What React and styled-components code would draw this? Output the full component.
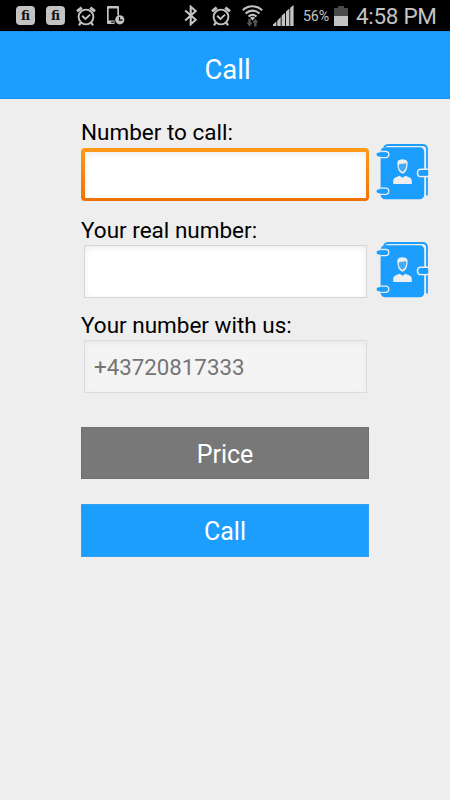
import React from 'react';
import styled, { createGlobalStyle } from 'styled-components';

const GlobalStyle = createGlobalStyle`
  * {
    box-sizing: border-box;
  }

  body {
    margin: 0;
    background: #eeeeee;
    font-family: Roboto, "Liberation Sans", sans-serif;
  }
`;

const Screen = styled.div`
  width: 450px;
  height: 800px;
  overflow: hidden;
  background: #eeeeee;
`;

const StatusBar = styled.div`
  height: 31px;
  padding: 0 14px 0 16px;
  display: flex;
  align-items: center;
  justify-content: space-between;
  background: #000;
  color: #c3c3c3;
`;

const StatusGroup = styled.div`
  display: flex;
  align-items: center;
`;

const StatusIcon = styled.svg`
  display: block;
  flex: none;
  margin-right: ${(props) => props.$gap || 0}px;
`;

const FiBadge = styled.div`
  width: 19px;
  height: 19px;
  margin-right: 11px;
  border-radius: 4px;
  background: #c3c3c3;
  color: #111;
  font-family: "DejaVu Serif", serif;
  font-size: 12.5px;
  font-weight: bold;
  line-height: 19px;
  text-align: center;
`;

const Percent = styled.span`
  width: 27px;
  margin-right: 4px;
  margin-left: -1px;
  font-size: 14.2px;
  line-height: 31px;
  letter-spacing: -0.1px;
  white-space: nowrap;
  padding-top: 2px;
`;

const Clock = styled.span`
  width: 80px;
  font-size: 22.5px;
  line-height: 31px;
  letter-spacing: -0.3px;
  padding-top: 2px;
  white-space: nowrap;
`;

const Header = styled.header`
  height: 68px;
  padding: 7px 0 0 5px;
  border-top: 1px solid #1c93ee;
  border-bottom: 1px solid #1c93ee;
  background: #1c9eff;
  color: #fff;
  font-size: 27.5px;
  line-height: 61px;
  text-align: center;
`;

const Form = styled.main`
  padding: 19px 0 0 81px;
`;

const Field = styled.div`
  margin-bottom: ${(props) => props.$space}px;
`;

const Label = styled.label`
  display: block;
  height: ${(props) => props.$height}px;
  color: #000;
  font-size: 22.5px;
  line-height: 29px;
  white-space: nowrap;
`;

const InputRow = styled.div`
  height: 53px;
  display: flex;
  align-items: center;
`;

const Input = styled.div`
  width: 283px;
  height: 53px;
  margin: 0 2px 0 3px;
  padding: 0 9px;
  border: 1px solid ${(props) => (props.$disabled ? '#dcdcdc' : '#d6d6d6')};
  background: ${(props) => (props.$disabled ? '#f4f4f4' : '#fff')};
  box-shadow: inset 0 2px 6px rgba(0, 0, 0, ${(props) => (props.$disabled ? 0.05 : 0.08)});
  color: #757575;
  font-size: 22.3px;
  line-height: 53px;
`;

const FocusedInput = styled(Input)`
  width: 288px;
  margin: 0;
  border: none;
  border-radius: 4px;
  background: linear-gradient(#fff, #fff) content-box, linear-gradient(#ff9a18, #ee7206);
  padding: 3.5px;
  box-shadow: none;

  &::before {
    content: '';
    display: block;
    height: 100%;
    box-shadow: inset 0 2px 6px rgba(0, 0, 0, 0.08);
  }
`;

const ContactButton = styled.button`
  width: 54px;
  height: 57px;
  margin: ${(props) => props.$top}px 0 0 7px;
  padding: 0;
  border: none;
  background: none;

  svg {
    display: block;
    overflow: visible;
  }
`;

const Button = styled.button`
  display: block;
  width: 288px;
  height: ${(props) => (props.$primary ? 53 : 52)}px;
  margin-bottom: 25px;
  padding: ${(props) => (props.$primary ? 1 : 2)}px 0 0;
  border: 1px solid ${(props) => (props.$primary ? '#389fee' : '#707070')};
  background: ${(props) => (props.$primary ? '#1c9eff' : '#787878')};
  color: #fff;
  font-family: inherit;
  font-size: 25px;
`;

const Actions = styled.div`
  padding-top: 34px;
`;

function AlarmIcon({ gap }) {
  return (
    <StatusIcon $gap={gap} width="20" height="20" viewBox="0 0 20 20" fill="none" stroke="#c3c3c3">
      <circle cx="10" cy="11" r="7.4" strokeWidth="1.9" />
      <path d="M6.2 9.8l3.2 3.1 4.7-4.3" strokeWidth="1.9" />
      <path d="M1.1 5.4l4.6-3.8M14.3 1.6l4.6 3.8" strokeWidth="3" />
      <path d="M4.8 16.5l-1.8 2.8M15.2 16.5l1.8 2.8" strokeWidth="2.2" />
    </StatusIcon>
  );
}

function PhoneClockIcon() {
  return (
    <StatusIcon width="18" height="19" viewBox="0 0 18 19" fill="none">
      <path d="M0 1a1 1 0 0 1 1-1h10a1 1 0 0 1 1 1v8.5h-1.7V2.5H1.7v12H7.5V18H1a1 1 0 0 1-1-1z" fill="#c3c3c3" />
      <path d="M4.2 16.2h2.6" stroke="#000" strokeWidth="1.2" />
      <circle cx="12.8" cy="13.8" r="4.6" fill="#c3c3c3" />
      <path d="M12.5 11v3.1h3" stroke="#000" strokeWidth="1.2" />
    </StatusIcon>
  );
}

function BluetoothIcon() {
  return (
    <StatusIcon $gap={13} width="14" height="21" viewBox="0 0 14 21" fill="none">
      <path d="M1.2 5.5l10.5 9.3-5 4.5V1.7l5 4.3L1.2 15.5" stroke="#c3c3c3" strokeWidth="2.1" />
    </StatusIcon>
  );
}

function WifiIcon() {
  return (
    <StatusIcon $gap={10} width="21" height="22" viewBox="0 0 21 22" fill="none">
      <g stroke="#c3c3c3" strokeWidth="2.1">
        <path d="M.8 5.2c5.6-5.2 13.8-5.2 19.4 0" />
        <path d="M3.6 8.5c4-3.8 9.8-3.8 13.8 0" />
        <path d="M6.5 11.6c2.4-2.2 5.6-2.2 8 0" />
      </g>
      <path d="M8 12.8q2.5-2 5 0l-2.5 2.6z" fill="#c3c3c3" />
      <path d="M6.3 13.7h2.5v4h1.8l-3 3.9-3.1-3.9h1.8zM12.1 21.6v-4h-1.8l3-3.9 3.1 3.9h-1.8v4z" fill="#555" />
    </StatusIcon>
  );
}

function SignalIcon() {
  return (
    <StatusIcon $gap={10} width="21" height="21" viewBox="0 0 21 21" fill="#c3c3c3">
      <path d="M0 21v-1.6l3.4-2.8V21zM4.3 21v-5.3L7.7 12v9zM8.6 21V10.8l3.5-3V21zM13 21V6.6l3.4-3V21zM17.2 21V2.8L20.6 0v21z" />
    </StatusIcon>
  );
}

function BatteryIcon() {
  return (
    <StatusIcon $gap={8} width="14" height="20" viewBox="0 0 14 20">
      <path d="M0 2h4V0h6v2h4v8H0z" fill="#4b4b4b" />
      <path d="M0 10h14v10H0z" fill="#c3c3c3" />
    </StatusIcon>
  );
}

function ContactsIcon() {
  return (
    <svg width="54" height="57" viewBox="0 0 54 57" fill="none">
      <path d="M8 3.2Q9.5 1 12 1h34.4q4.6 0 4.6 4.6V51.5" stroke="#1c9eff" strokeWidth="1.8" />
      <rect x="4.6" y="3.2" width="43.6" height="52" rx="4.5" fill="#1c9eff" />
      <g>
        <path d="M4.4 7.5h5.2q3.2 0 3.2 3.1t-3.2 3.1H4.4" fill="#1c9eff" stroke="#eee" strokeWidth="1.3" />
        <rect x=".6" y="8.6" width="11.2" height="4" rx="2" fill="#1c9eff" />
        <path d="M4.4 44.2h5.2q3.2 0 3.2 3.1t-3.2 3.1H4.4" fill="#1c9eff" stroke="#eee" strokeWidth="1.3" />
        <rect x=".6" y="45.3" width="11.2" height="4" rx="2" fill="#1c9eff" />
      </g>
      <path d="M52 25.2h-7q-3.5 0-3.5 3.7t3.5 3.7h7" fill="#1c9eff" stroke="#eee" strokeWidth="1.5" />
      <rect x="43.2" y="26.4" width="9" height="5" rx="1" fill="#1c9eff" />
      <path d="M21.6 22.5q-2-7.3 4.8-7.3 6.8 0 5 7.3-.7 6-4.9 7.3-4.3-1.3-4.9-7.3z" fill="#eee" />
      <path d="M22.8 20.8q2-1.5 7.4-1.5.8 5.6-3.7 8.6-4.3-2.4-3.7-7.1z" fill="#45acfa" />
      <path d="M17.2 40v-3.4q0-2.5 2.8-3.4l3.6-1.4 2.9 1.9 2.9-1.9 3.6 1.4q2.8.9 2.8 3.4V40z" fill="#eee" />
    </svg>
  );
}

function App() {
  return (
    <>
      <GlobalStyle />
      <Screen>
        <StatusBar>
          <StatusGroup>
            <FiBadge>fi</FiBadge>
            <FiBadge>fi</FiBadge>
            <AlarmIcon gap={11} />
            <PhoneClockIcon />
          </StatusGroup>
          <StatusGroup>
            <BluetoothIcon />
            <AlarmIcon gap={11} />
            <WifiIcon />
            <SignalIcon />
            <Percent>56%</Percent>
            <BatteryIcon />
            <Clock>4:58 PM</Clock>
          </StatusGroup>
        </StatusBar>
        <Header>Call</Header>
        <Form>
          <Field $space={15}>
            <Label $height={30}>Number to call:</Label>
            <InputRow>
              <FocusedInput />
              <ContactButton $top={-4} aria-label="Contacts"><ContactsIcon /></ContactButton>
            </InputRow>
          </Field>
          <Field $space={13}>
            <Label $height={29}>Your real number:</Label>
            <InputRow>
              <Input />
              <ContactButton $top={-2} aria-label="Contacts"><ContactsIcon /></ContactButton>
            </InputRow>
          </Field>
          <Field $space={0}>
            <Label $height={29}>Your number with us:</Label>
            <InputRow>
              <Input $disabled>+43720817333</Input>
            </InputRow>
          </Field>
          <Actions>
            <Button type="button">Price</Button>
            <Button type="button" $primary>Call</Button>
          </Actions>
        </Form>
      </Screen>
    </>
  );
}

export default App;
